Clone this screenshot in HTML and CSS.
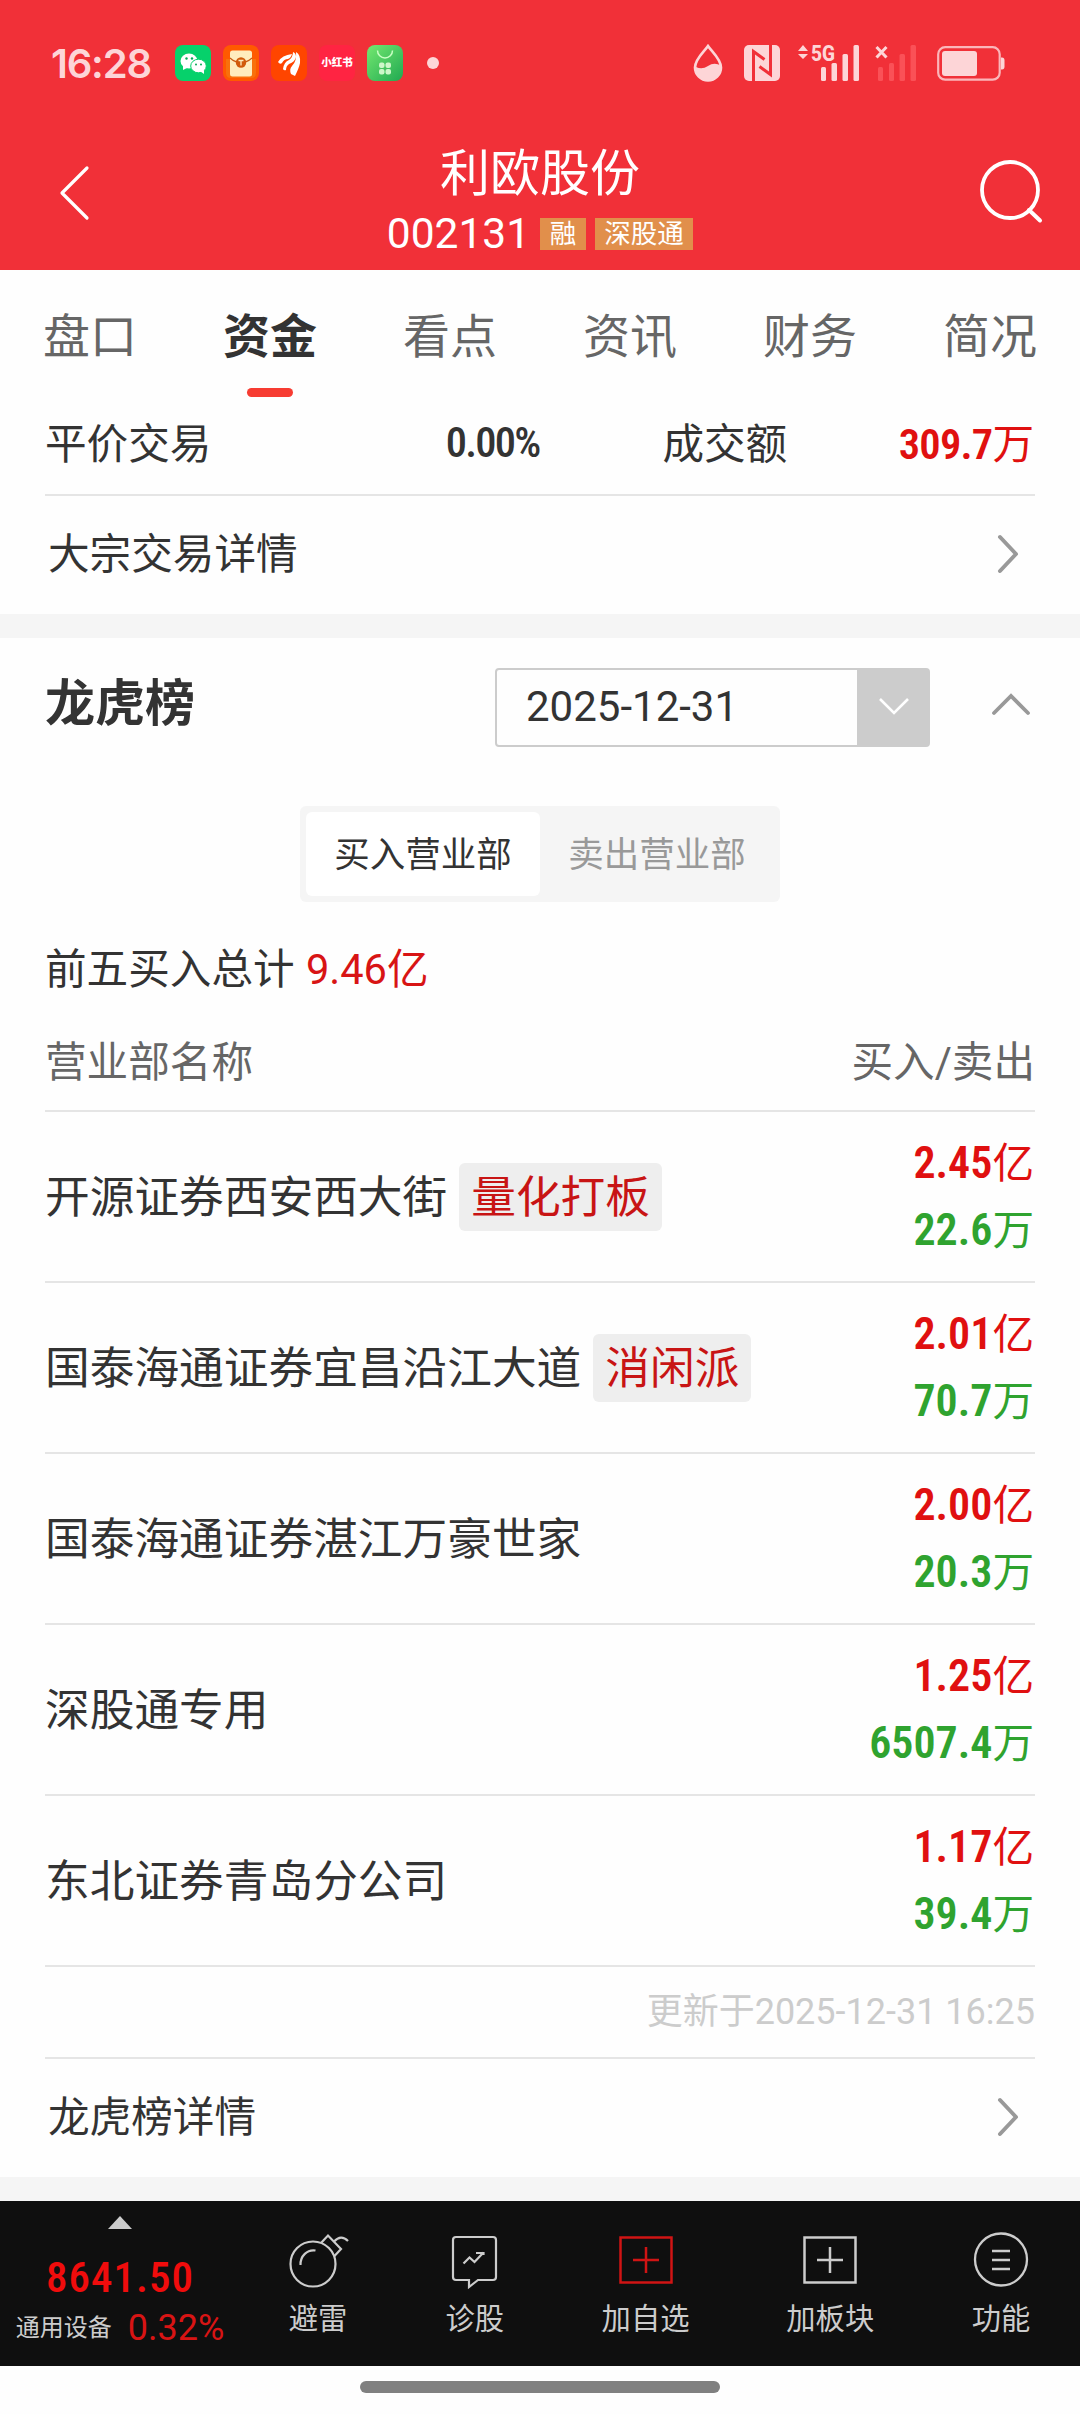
FILE: index.html
```
<!DOCTYPE html>
<html lang="zh-CN">
<head>
    <meta charset="UTF-8">
    <meta name="viewport" content="width=device-width, initial-scale=1.0">
    <title>利欧股份 002131</title>
    <link rel="stylesheet" href="styles.css">
</head>
<body>
    <header class="header">
        <!-- 状态栏 -->
        <div class="status-bar">
            <span class="time">16:28</span>
            <div class="app-icons">
                <svg width="36" height="36" viewBox="0 0 36 36">
                    <rect width="36" height="36" rx="8" fill="#06d16b"/>
                    <ellipse cx="14" cy="16" rx="8.5" ry="7.5" fill="#fff"/>
                    <path d="M8 20l0 5 4-2z" fill="#fff"/>
                    <ellipse cx="23.500" cy="21" rx="7.800" ry="6.800" fill="#fff" stroke="#06d16b"/>
                    <path d="M25 26l4 3 0-4z" fill="#fff"/>
                    <g fill="#06a955"><circle cx="11.500" cy="13.500" r="1.200"/><circle cx="17" cy="13.500" r="1.200"/><circle cx="21" cy="19.500" r="1"/><circle cx="26" cy="19.500" r="1"/></g>
                </svg>
                <svg width="36" height="36" viewBox="0 0 36 36">
                    <rect width="36" height="36" rx="8" fill="#ff5a00"/>
                    <path d="M3 14v14q0 5 5 5h20q5 0 5-5V14" fill="#f8700c"/>
                    <rect x="7" y="5.500" width="22" height="26" rx="2.500" fill="#ffecbd"/>
                    <path d="M7 13q5 4.500 11 4.500T29 13" fill="none" stroke="#c85a10" stroke-width="1.200"/>
                    <circle cx="18" cy="17.500" r="5.200" fill="#d15a0a"/>
                    <path d="M15.500 15.500h5M18 15.500v5" stroke="#ffecbd" stroke-width="1.300"/>
                </svg>
                <svg width="36" height="36" viewBox="0 0 36 36">
                    <rect width="36" height="36" rx="8" fill="#ff4500"/>
                    <path d="M7 17Q11 10 21 9Q20 13 17 14Q13 14 11 18Q9 20 7 17z" fill="#fff"/>
                    <path d="M12 24Q13 17 18 15Q22 12 22 7Q25 8 25 12Q24 17 18 19Q15 21 15 25Q13 26 12 24z" fill="#fff"/>
                    <path d="M20 29Q18 24 21 21Q26 16 25 7Q30 10 29 18Q28 23 24 31z" fill="#fff"/>
                </svg>
                <span class="app-xhs">小红书</span>
                <svg width="36" height="36" viewBox="0 0 36 36">
                    <defs><linearGradient id="bag" x1="0" y1="0" x2="1" y2="1"><stop offset="0" stop-color="#74e870"/><stop offset="1" stop-color="#20a951"/></linearGradient></defs>
                    <rect width="36" height="36" rx="8" fill="url(#bag)"/>
                    <path d="M10.500 5.500a7.500 7.500 0 0 0 15 0" fill="none" stroke="#c9ffc4" stroke-width="1.500"/>
                    <g fill="#cdf7c9"><rect x="12" y="17.500" width="5.500" height="5.500" rx="2"/><rect x="18.500" y="17.500" width="5.500" height="5.500" rx="2"/><rect x="12" y="24" width="5.500" height="5.500" rx="2"/><rect x="18.500" y="24" width="5.500" height="5.500" rx="2"/></g>
                </svg>
            </div>
            <span class="dot"></span>
            <div class="sys-icons">
                <svg width="30" height="38" viewBox="0 0 30 38">
                    <path d="M15 2C11 8 2 15 2 23.500a13 13 0 0 0 26 0C28 15 19 8 15 2z" fill="none" stroke="#fdd5d7" stroke-width="2.600"/>
                    <path d="M3 23Q9 26 15 22Q21 18 28 21.500V24a13 12.500 0 0 1-26 0z" fill="#fdd5d7"/>
                </svg>
                <svg class="nfc" width="36" height="36" viewBox="0 0 36 36">
                    <rect width="36" height="36" rx="5" fill="#fdd5d7"/>
                    <path d="M9.500 36V6.500L20.500 14.500M26.500 0V29.500L15.500 21.500" fill="none" stroke="#f13038" stroke-width="3"/>
                </svg>
                <svg class="signal" width="62" height="38" viewBox="0 0 62 38">
                    <path d="M5 1l5 6H0zM0 10h10l-5 5z" fill="#fdd5d7"/>
                    <text class="net" x="13" y="16.500" textLength="24" lengthAdjust="spacingAndGlyphs">5G</text>
                    <g fill="#fdd5d7"><rect x="23" y="23" width="5" height="14" rx="1.500"/><rect x="33.500" y="19" width="5.500" height="18" rx="1.500"/><rect x="44.500" y="10" width="5.500" height="27" rx="1.500"/><rect x="55.500" y="1" width="5.500" height="36" rx="1.500"/></g>
                </svg>
                <svg class="signal-off" width="42" height="38" viewBox="0 0 42 38">
                    <path d="M1.500 3l10 10.500M11.500 3l-10 10.500" stroke="#fdd5d7" stroke-width="3"/>
                    <g fill="#fa5157"><rect x="3" y="23" width="5" height="14" rx="1.500"/><rect x="14" y="19" width="5" height="18" rx="1.500"/><rect x="24.500" y="10" width="5.500" height="27" rx="1.500"/><rect x="35.500" y="1" width="5.500" height="36" rx="1.500"/></g>
                </svg>
                <svg width="68" height="36" viewBox="0 0 68 36">
                    <rect x="1.200" y="2.200" width="61.500" height="32.500" rx="7" fill="none" stroke="#fbb6ba" stroke-width="2.200"/>
                    <rect x="5" y="6" width="35" height="25" rx="3" fill="#fdd5d7"/>
                    <path d="M64 12.500h1q2.500 0 2.500 3v6q0 3-2.500 3h-1z" fill="#fdd5d7"/>
                </svg>
            </div>
        </div>
        <!-- 标题栏 -->
        <div class="title-bar">
            <svg class="back" width="32" height="56" viewBox="0 0 32 56"><path d="M29 3L4 28l25 25" fill="none" stroke="#fff" stroke-width="3.200" stroke-linecap="round" stroke-linejoin="round"/></svg>
            <div class="title">
                <h1>利欧股份</h1>
                <div class="code"><span class="num">002131</span><span class="badge">融</span><span class="badge">深股通</span></div>
            </div>
            <svg class="search" width="66" height="66" viewBox="0 0 66 66"><circle cx="31" cy="30" r="28" fill="none" stroke="#fff" stroke-width="3.800"/><path d="M50 50l11 10.500" stroke="#fff" stroke-width="4" stroke-linecap="round"/></svg>
        </div>
    </header>

    <nav class="tabs">
        <span>盘口</span>
        <span class="active">资金</span>
        <span>看点</span>
        <span>资讯</span>
        <span>财务</span>
        <span>简况</span>
    </nav>

    <!-- 大宗交易 -->
    <section class="card">
        <div class="trade-row">
            <span>平价交易</span>
            <span class="din rate">0.00%</span>
            <span class="label">成交额</span>
            <span class="red amount"><b class="din">309.7</b>万</span>
        </div>
        <div class="more">
            <span>大宗交易详情</span>
            <svg width="24" height="40" viewBox="0 0 24 40"><path d="M4 3l16 17L4 37" fill="none" stroke="#999" stroke-width="4" stroke-linecap="round" stroke-linejoin="round"/></svg>
        </div>
    </section>

    <!-- 龙虎榜 -->
    <section class="card">
        <div class="card-head">
            <h2>龙虎榜</h2>
            <div class="date-select">
                <span>2025-12-31</span>
                <i><svg width="32" height="20" viewBox="0 0 32 20"><path d="M2 2l14 14L30 2" fill="none" stroke="#fff" stroke-width="2.600"/></svg></i>
            </div>
            <svg class="fold" width="40" height="24" viewBox="0 0 40 24"><path d="M3 21L20 4l17 17" fill="none" stroke="#999" stroke-width="3.800" stroke-linecap="round"/></svg>
        </div>
        <div class="switch">
            <span class="on">买入营业部</span>
            <span>卖出营业部</span>
        </div>
        <p class="total">前五买入总计 <span class="total-num">9.46亿</span></p>
        <div class="list-head">
            <span>营业部名称</span>
            <span>买入/卖出</span>
        </div>
        <ul class="list">
            <li>
                <div class="name">开源证券西安西大街<em>量化打板</em></div>
                <div class="value"><p class="red"><b class="din">2.45</b>亿</p><p class="green"><b class="din">22.6</b>万</p></div>
            </li>
            <li>
                <div class="name">国泰海通证券宜昌沿江大道<em>消闲派</em></div>
                <div class="value"><p class="red"><b class="din">2.01</b>亿</p><p class="green"><b class="din">70.7</b>万</p></div>
            </li>
            <li>
                <div class="name">国泰海通证券湛江万豪世家</div>
                <div class="value"><p class="red"><b class="din">2.00</b>亿</p><p class="green"><b class="din">20.3</b>万</p></div>
            </li>
            <li>
                <div class="name">深股通专用</div>
                <div class="value"><p class="red"><b class="din">1.25</b>亿</p><p class="green"><b class="din">6507.4</b>万</p></div>
            </li>
            <li>
                <div class="name">东北证券青岛分公司</div>
                <div class="value"><p class="red"><b class="din">1.17</b>亿</p><p class="green"><b class="din">39.4</b>万</p></div>
            </li>
        </ul>
        <p class="update">更新于2025-12-31 16:25</p>
        <div class="more">
            <span>龙虎榜详情</span>
            <svg width="24" height="40" viewBox="0 0 24 40"><path d="M4 3l16 17L4 37" fill="none" stroke="#999" stroke-width="4" stroke-linecap="round" stroke-linejoin="round"/></svg>
        </div>
    </section>

    <!-- 底部工具栏 -->
    <footer class="toolbar">
        <div class="index">
            <i class="arrow"></i>
            <div class="index-num">8641.50</div>
            <div class="index-sub"><span>通用设备</span><span class="pct">0.32%</span></div>
        </div>
        <div class="tools">
            <div class="tool">
                <svg width="60" height="60" viewBox="0 0 60 60" fill="none" stroke="#ccc" stroke-width="2.200">
                    <circle cx="25" cy="35" r="22.500"/>
                    <path d="M12.500 36a13 14 0 0 1 15-14.500M33 14l7-7.500 13 13.500-7 7.500M46 12.500Q53 5 60 12"/>
                </svg>
                <span>避雷</span>
            </div>
            <div class="tool">
                <svg width="60" height="60" viewBox="0 0 60 60" fill="none" stroke="#ccc" stroke-width="2.200">
                    <path d="M11 8h37q3 0 3 3v37q0 3-3 3H33l-9 7v-7H11q-3 0-3-3V11q0-3 3-3z"/>
                    <path d="M18.500 34.500l6-6 5 4.500 9-9.500M31 24h7.500v2"/>
                </svg>
                <span>诊股</span>
            </div>
            <div class="tool">
                <svg width="60" height="60" viewBox="0 0 60 60" fill="none" stroke="#d01414" stroke-width="2.500">
                    <path d="M4.500 8.500h51v45h-51zM17 31h26M30 18v26"/>
                </svg>
                <span>加自选</span>
            </div>
            <div class="tool">
                <svg width="60" height="60" viewBox="0 0 60 60" fill="none" stroke="#ccc" stroke-width="2.500">
                    <path d="M4.500 8.500h51v45h-51zM17 31h26M30 18v26"/>
                </svg>
                <span>加板块</span>
            </div>
            <div class="tool">
                <svg width="60" height="60" viewBox="0 0 60 60" fill="none" stroke="#ccc" stroke-width="2.300">
                    <circle cx="30" cy="30.500" r="26"/>
                    <path d="M21 22h18M21 31h18M21 40h18"/>
                </svg>
                <span>功能</span>
            </div>
        </div>
    </footer>
    <div class="home-bar"></div>
</body>
</html>
```
FILE: styles.css
```
* {
    box-sizing: border-box;
}
body {
    margin: 0;
    width: 1080px;
    font-family: Roboto, "Noto Sans CJK SC", sans-serif;
    font-size: 41.6px;
    color: #333;
    background-color: #fefefe;
}
h1, h2, p, ul {
    margin: 0;
    padding: 0;
    font-weight: normal;
}
em, i {
    font-style: normal;
}
svg {
    display: block;
    flex: none;
    overflow: visible;
}

/* 顶部 */
.header {
    height: 270px;
    background-color: #f13038;
    color: #fff;
}
.status-bar {
    display: flex;
    align-items: center;
    height: 126px;
    padding: 0 75px 0 51px;
}
.time {
    width: 124px;
    font-family: Inter, sans-serif;
    font-size: 40px;
    font-weight: 600;
    letter-spacing: -1.2px;
    color: #fdd5d7;
}
.app-icons {
    display: flex;
    gap: 12px;
}
.app-xhs {
    width: 36px;
    height: 36px;
    border-radius: 8px;
    background-color: #ff2442;
    font-size: 10.500px;
    font-weight: 900;
    line-height: 36px;
    text-align: center;
    white-space: nowrap;
}
.dot {
    width: 12px;
    height: 12px;
    margin-left: 24px;
    border-radius: 50%;
    background-color: #fdd5d7;
}
.sys-icons {
    display: flex;
    align-items: center;
    margin-left: auto;
}
.nfc {
    margin-left: 21px;
}
.signal {
    margin-left: 18px;
}
.net {
    font-size: 22.500px;
    font-weight: 800;
    fill: #fdd5d7;
}
.signal-off {
    margin: 0 20px 0 15px;
}
.title-bar {
    display: flex;
    justify-content: space-between;
    align-items: center;
    height: 133px;
    padding: 0 35px 0 58px;
}
.title {
    display: flex;
    flex-direction: column;
    align-items: center;
    padding: 20px 0 0 11px;
}
h1 {
    font-size: 50px;
    line-height: 62px;
}
.code {
    display: flex;
    align-items: center;
    height: 58px;
}
.num {
    margin-right: 10px;
    font-size: 42.500px;
}
.badge {
    height: 32px;
    margin-right: 9px;
    padding: 0 9.500px;
    background-color: #e18f4b;
    font-size: 26.500px;
    line-height: 31px;
}
.badge:last-child {
    margin-right: 0;
}

/* 标签页 */
.tabs {
    display: flex;
    height: 129px;
    color: #666;
    font-size: 47px;
}
.tabs span {
    display: flex;
    flex-direction: column;
    align-items: center;
    width: 180px;
    padding-top: 32px;
    line-height: 70px;
}
.tabs .active {
    color: #333;
    font-weight: 700;
}
.tabs .active::after {
    content: "";
    width: 46px;
    height: 9px;
    margin-top: 16px;
    border-radius: 5px;
    background-color: #f73c32;
}

.card {
    padding: 0 45px;
    border-bottom: 24px solid #f5f5f5;
}
.din {
    font-stretch: 75%;
    font-size: 44px;
    font-weight: 600;
}
.red {
    color: #e01010;
}
.green {
    color: #2fa32f;
}
.trade-row {
    display: flex;
    align-items: center;
    height: 97px;
    padding-bottom: 11px;
    border-bottom: 2px solid #e5e5e5;
}
.trade-row .din {
    font-size: 42.500px;
    letter-spacing: -0.8px;
}
.trade-row .rate {
    width: 328px;
    padding-top: 2px;
    font-weight: 500;
    letter-spacing: -1.8px;
    text-align: right;
}
.label {
    margin-left: 123px;
}
.amount {
    margin-left: auto;
    padding-right: 1px;
}
.more {
    display: flex;
    justify-content: space-between;
    align-items: center;
    height: 118px;
    padding: 0 15px 2px 3px;
}
.more span {
    padding-bottom: 7px;
}

/* 龙虎榜 */
.card-head {
    display: flex;
    align-items: center;
    height: 138px;
}
h2 {
    width: 450px;
    padding-bottom: 16px;
    font-size: 50px;
    font-weight: 700;
}
.date-select {
    display: flex;
    justify-content: space-between;
    width: 435px;
    height: 79px;
    border: 2px solid #ccc;
    border-radius: 4px;
    line-height: 73px;
}
.date-select span {
    padding-left: 29px;
    font-size: 42px;
}
.date-select i {
    display: flex;
    align-items: center;
    justify-content: center;
    width: 71px;
    padding-left: 3px;
    background-color: #ccc;
}
.fold {
    margin: 0 0 6px 61px;
}
.switch {
    display: flex;
    width: 480px;
    height: 96px;
    margin: 30px auto 0;
    padding: 6px;
    border-radius: 6px;
    background-color: #f5f5f5;
    font-size: 35.500px;
    line-height: 86px;
    text-align: center;
    color: #999;
}
.switch span {
    flex: 1;
}
.switch .on {
    border-radius: 6px;
    background-color: #fff;
    color: #333;
}
.total {
    height: 112px;
    padding-top: 38px;
    line-height: 60px;
}
.total-num {
    margin-left: 1px;
    color: #d81414;
}
.list-head {
    display: flex;
    justify-content: space-between;
    height: 98px;
    padding-top: 19px;
    border-bottom: 2px solid #e5e5e5;
    line-height: 60px;
    color: #666;
}
.list {
    list-style: none;
}
.list li {
    display: flex;
    justify-content: space-between;
    align-items: center;
    height: 171px;
    border-bottom: 2px solid #e5e5e5;
}
.name {
    display: flex;
    height: 68px;
    font-size: 44.700px;
    line-height: 71px;
}
.name em {
    margin-left: 12px;
    padding: 0 12px;
    border-radius: 6px;
    background-color: #eee;
    color: #c81414;
}
.value {
    padding-right: 1px;
    text-align: right;
    line-height: 67px;
}
.update {
    height: 92px;
    border-bottom: 2px solid #e5e5e5;
    font-size: 36px;
    line-height: 91px;
    text-align: right;
    color: #ccc;
}

/* 底部 */
.toolbar {
    display: flex;
    height: 165px;
    background-color: #0f0f0f;
    color: #ccc;
}
.index {
    display: flex;
    flex-direction: column;
    align-items: center;
    width: 240px;
    padding-top: 15px;
}
.arrow {
    border: 12px solid transparent;
    border-top: 0;
    border-bottom: 13px solid #ccc;
}
.index-num {
    margin-top: 21px;
    font-size: 43px;
    font-stretch: 75%;
    font-weight: 500;
    letter-spacing: 1px;
    line-height: 54px;
    color: #f00c0c;
}
.index-sub {
    display: flex;
    align-items: center;
    gap: 16px;
    font-size: 24px;
    line-height: 48px;
}
.pct {
    font-size: 36px;
    color: #d81414;
}
.tools {
    display: flex;
    flex: 1;
    justify-content: space-between;
    padding: 28px 49px 0 48px;
}
.tool {
    display: flex;
    flex-direction: column;
    align-items: center;
    font-size: 29.300px;
    line-height: 60px;
}
.home-bar {
    width: 360px;
    height: 12px;
    margin: 15px auto 21px;
    border-radius: 6px;
    background-color: #808080;
}
```
